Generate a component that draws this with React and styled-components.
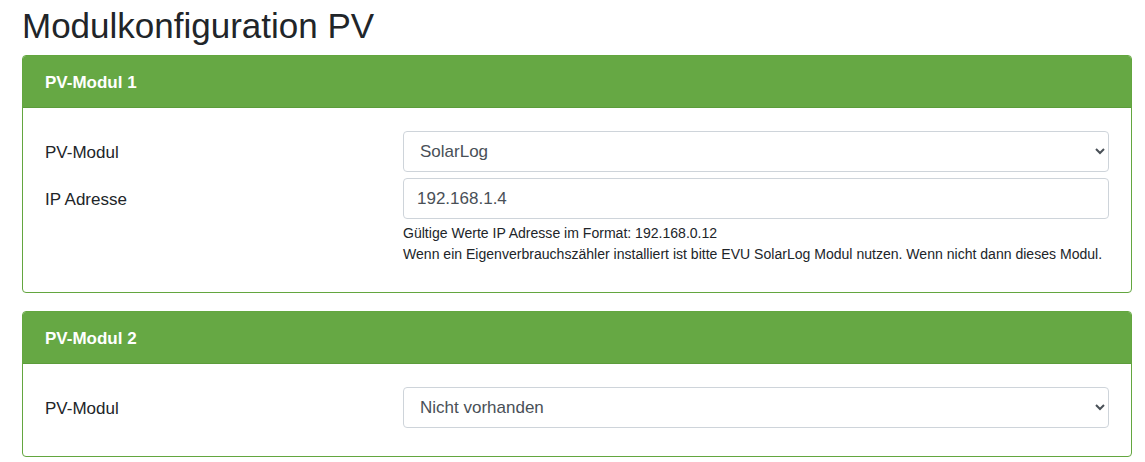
import React from 'react';
import styled, { createGlobalStyle } from 'styled-components';

const GlobalStyle = createGlobalStyle`
    body {
        margin: 0;
        background: #ffffff;
        font-family: 'Liberation Sans', Arial, sans-serif;
        color: #212529;
    }
`;

const Page = styled.div`
    padding: 5px 0 0 22px;
    width: 1110px;
`;

const Title = styled.h1`
    margin: 0 0 8px;
    font-size: 35px;
    line-height: 42px;
    font-weight: 400;
    color: #212529;
`;

const Card = styled.section`
    border: 1px solid #63a63f;
    border-radius: 4px;
    background: #ffffff;
    overflow: hidden;

    & + & {
        margin-top: 18px;
    }
`;

const CardHeader = styled.div`
    height: 52px;
    box-sizing: border-box;
    display: flex;
    align-items: center;
    padding: 2px 22px 0;
    background: #66a844;
    border-bottom: 1px solid #5c9c3b;
    color: #ffffff;
    font-size: 17px;
    font-weight: 700;
`;

const CardBody = styled.div`
    padding: 23px 22px 27px;
    display: flex;
    flex-direction: column;
    gap: 5px;
`;

const Row = styled.div`
    display: grid;
    grid-template-columns: 1fr 2fr;
    column-gap: 5px;
    align-items: start;
`;

const Label = styled.label`
    padding-top: 1px;
    font-size: 17px;
    line-height: 41px;
    color: #212529;
`;

const Field = styled.div`
    display: flex;
    flex-direction: column;
`;

const Select = styled.select`
    height: 41px;
    width: 100%;
    padding: 0 12px;
    font-family: 'Liberation Sans', Arial, sans-serif;
    font-size: 17px;
    color: #495057;
    background: #ffffff;
    border: 1px solid #ced4da;
    border-radius: 4px;
`;

const Input = styled.input`
    box-sizing: border-box;
    height: 41px;
    width: 100%;
    padding: 0 13px;
    font-family: 'Liberation Sans', Arial, sans-serif;
    font-size: 17px;
    color: #495057;
    background: #ffffff;
    border: 1px solid #ced4da;
    border-radius: 4px;
`;

const Help = styled.small`
    display: block;
    margin-top: 4px;
    font-size: 14.05px;
    line-height: 21px;
    color: #212529;
`;

function ModuleSelect({ value, options }) {
    return (
        <Select defaultValue={value}>
            {options.map((o) => (
                <option key={o} value={o}>{o}</option>
            ))}
        </Select>
    );
}

const pvOptions = ['Nicht vorhanden', 'SolarLog', 'SMA Webbox', 'Fronius', 'Kostal Piko'];

export default function App() {
    return (
        <>
            <GlobalStyle />
            <Page>
                <Title>Modulkonfiguration PV</Title>

                <Card>
                    <CardHeader>PV-Modul 1</CardHeader>
                    <CardBody>
                        <Row>
                            <Label>PV-Modul</Label>
                            <ModuleSelect value="SolarLog" options={pvOptions} />
                        </Row>
                        <Row>
                            <Label>IP Adresse</Label>
                            <Field>
                                <Input type="text" defaultValue="192.168.1.4" />
                                <Help>
                                    Gültige Werte IP Adresse im Format: 192.168.0.12<br />
                                    Wenn ein Eigenverbrauchszähler installiert ist bitte EVU SolarLog Modul nutzen. Wenn nicht dann dieses Modul.
                                </Help>
                            </Field>
                        </Row>
                    </CardBody>
                </Card>

                <Card>
                    <CardHeader>PV-Modul 2</CardHeader>
                    <CardBody>
                        <Row>
                            <Label>PV-Modul</Label>
                            <ModuleSelect value="Nicht vorhanden" options={pvOptions} />
                        </Row>
                    </CardBody>
                </Card>
            </Page>
        </>
    );
}
